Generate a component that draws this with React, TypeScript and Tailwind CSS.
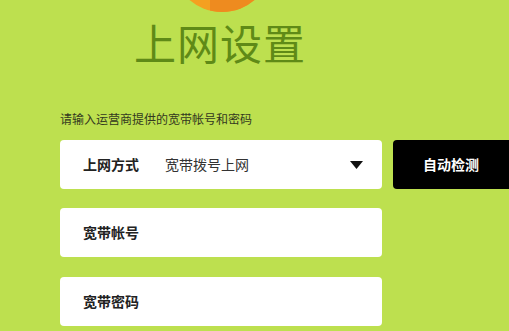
const cjk = { fontFamily: '"Noto Sans CJK SC", "Liberation Sans", sans-serif' };

type FieldProps = {
  label: string;
  children?: React.ReactNode;
};

const Field = ({ label, children }: FieldProps) => (
  <div className="flex h-[49px] w-[322px] items-center rounded-[4px] bg-white pl-[23px] pr-[19px]">
    <span className="text-[14px] font-bold text-[#222]">{label}</span>
    {children}
  </div>
);

export default function App() {
  return (
    <div className="h-[331px] w-[509px] overflow-hidden bg-[#bde04f]" style={cjk}>
      <div className="relative h-[101px] pl-[134px]">
        <div className="absolute left-[172px] top-[-88px] h-[100px] w-[100px] overflow-hidden rounded-full bg-[#f4a020]">
          <div className="absolute right-0 top-0 h-full w-[62%] bg-[#ee8b1f]" />
        </div>
        <h1 className="pt-[14px] text-[42px] leading-[56px] font-normal tracking-[1px] text-[#5f8a17]">
          上网设置
        </h1>
      </div>
      <div className="pl-[60px]">
        <p className="mt-[10px] text-[12px] leading-[16px] text-[#333820]">请输入运营商提供的宽带帐号和密码</p>
        <div className="mt-[13px] flex gap-[11px]">
          <Field label="上网方式">
            <span className="ml-[26px] text-[14px] text-[#333]">宽带拨号上网</span>
            <svg className="ml-auto" width="13" height="8" viewBox="0 0 13 8">
              <path d="M0 0 L13 0 L6.5 8 Z" fill="#111" />
            </svg>
          </Field>
          <button
            type="button"
            className="h-[49px] flex-1 rounded-l-[4px] bg-black text-[14px] font-bold text-white"
          >
            自动检测
          </button>
        </div>
        <div className="mt-[19px] flex flex-col gap-[20px]">
          <Field label="宽带帐号" />
          <Field label="宽带密码" />
        </div>
      </div>
    </div>
  );
}
